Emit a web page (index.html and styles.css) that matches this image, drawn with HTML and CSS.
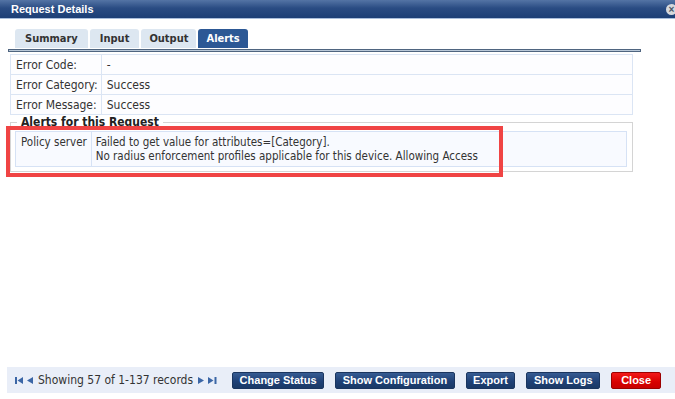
FILE: index.html
```html
<!DOCTYPE html>
<html lang="en">
<head>
    <meta charset="UTF-8">
    <title>Request Details</title>
    <link rel="stylesheet" href="styles.css">
</head>
<body>
    <div class="dialog">
        <div class="dialog-title">
            <span>Request Details</span>
            <span class="close-icon">&times;</span>
        </div>

        <div class="tabs">
            <div class="tab">Summary</div>
            <div class="tab">Input</div>
            <div class="tab">Output</div>
            <div class="tab active">Alerts</div>
        </div>
        <div class="tab-rule"></div>

        <table class="info-table">
            <tr><td class="label">Error Code:</td><td>-</td></tr>
            <tr><td class="label">Error Category:</td><td>Success</td></tr>
            <tr><td class="label">Error Message:</td><td>Success</td></tr>
        </table>

        <fieldset class="alerts">
            <legend>Alerts for this Request</legend>
            <table class="alert-table">
                <tr>
                    <td class="source">Policy server</td>
                    <td>Failed to get value for attributes=[Category].<br>No radius enforcement profiles applicable for this device. Allowing Access</td>
                </tr>
            </table>
        </fieldset>

        <div class="highlight"></div>

        <div class="footer">
            <div class="pager">
                <svg class="pg-icon" width="8" height="7" viewBox="0 0 8 7"><rect x="0" y="0" width="2" height="7"/><path d="M8 0 L2.5 3.5 L8 7 Z"/></svg>
                <svg class="pg-icon" width="6" height="7" viewBox="0 0 6 7"><path d="M6 0 L0 3.5 L6 7 Z"/></svg>
                <span class="pg-text">Showing 57 of 1-137 records</span>
                <svg class="pg-icon" width="6" height="7" viewBox="0 0 6 7"><path d="M0 0 L6 3.5 L0 7 Z"/></svg>
                <svg class="pg-icon" width="9" height="7" viewBox="0 0 9 7"><path d="M0 0 L5.5 3.5 L0 7 Z"/><rect x="6.5" y="0" width="2" height="7"/></svg>
            </div>
            <button class="btn">Change Status</button>
            <button class="btn">Show Configuration</button>
            <button class="btn">Export</button>
            <button class="btn">Show Logs</button>
            <button class="btn btn-close">Close</button>
        </div>
    </div>
</body>
</html>
```

FILE: styles.css
```css
* {
    margin: 0;
    padding: 0;
    box-sizing: border-box;
}

body {
    font-family: "DejaVu Sans Condensed", "DejaVu Sans", sans-serif;
    font-size: 12px;
    color: #333;
    background: #fff;
}

.dialog {
    position: relative;
    height: 399px;
    display: flex;
    flex-direction: column;
}

.dialog-title {
    height: 19px;
    padding-left: 11px;
    display: flex;
    align-items: center;
    justify-content: space-between;
    background: linear-gradient(#5474a5 0%, #2a4c83 45%, #1c3f76 100%);
    border-bottom: 1px solid #a9bedc;
    color: #fff;
    font-family: "Liberation Sans", Arial, sans-serif;
    font-weight: bold;
    font-size: 11px;
}

.close-icon {
    width: 11px;
    height: 11px;
    margin-right: -2px;
    border-radius: 50%;
    background: #d6d9de;
    color: #4a5566;
    font-size: 10px;
    line-height: 11px;
    text-align: center;
}

.tabs {
    display: flex;
    gap: 2px;
    margin: 10px 0 0 15px;
}

.tab {
    height: 19px;
    padding: 0 10px;
    line-height: 19px;
    background: #dde7f1;
    border-radius: 3px 3px 0 0;
    font-size: 11px;
    font-weight: bold;
    color: #333;
}

.tab:nth-child(3) {
    padding: 0 8px;
}

.tab.active {
    background: #2c5895;
    color: #fff;
    padding: 0 8px;
}

.tab-rule {
    width: 633px;
    height: 3px;
    margin: 1px 0 0 8px;
    border: 1px solid #4f6580;
    background: #b9c8d8;
}

.info-table {
    width: 623px;
    margin: 2px 0 0 10px;
    border-collapse: collapse;
    background: #fdfdff;
}

.info-table td {
    height: 20px;
    padding: 0 5px;
    border: 1px solid #dbe5f4;
}

.info-table .label {
    width: 1px;
    padding-right: 3px;
    white-space: nowrap;
}

.alerts {
    width: 623px;
    margin: 0 0 0 10px;
    padding: 2px 5px 4px 4px;
    border: 1px solid #d4d4d4;
}

.alerts legend {
    margin-left: 2px;
    padding: 0 4px;
    line-height: 14px;
    font-weight: bold;
    font-size: 12px;
    color: #222;
}

.alert-table {
    width: 100%;
    border-collapse: collapse;
    background: #f8faff;
    font-size: 11.5px;
}

.alert-table td {
    padding: 3px 4px;
    border: 1px solid #d6e2f5;
    line-height: 14px;
    vertical-align: top;
}

.alert-table .source {
    width: 1px;
    padding-left: 5px;
    white-space: nowrap;
}

.highlight {
    position: absolute;
    left: 6px;
    top: 126px;
    width: 497px;
    height: 51px;
    border: 4px solid #f04444;
}

.footer {
    margin: auto 0 6px 7px;
    height: 26px;
    display: flex;
    align-items: center;
    gap: 11px;
    padding-left: 8px;
    background: #e9eef8;
}

.pager {
    display: flex;
    align-items: center;
    gap: 4px;
    margin-right: 4px;
    font-size: 12px;
}

.pg-icon {
    fill: #3b66a6;
}

.pg-text {
    margin: 0 1px;
}

.btn {
    height: 17px;
    padding: 0 6.5px;
    border: 1px solid #1a355f;
    border-radius: 2px;
    background: linear-gradient(#365b92 0%, #1f4177 55%, #1a3966 100%);
    color: #fff;
    font-family: "Liberation Sans", Arial, sans-serif;
    font-weight: bold;
    font-size: 11px;
    cursor: pointer;
}

.btn-close {
    padding: 0 9px;
    border-color: #9c0000;
    background: linear-gradient(#f21a1a 0%, #d80000 60%, #c80000 100%);
}
```
